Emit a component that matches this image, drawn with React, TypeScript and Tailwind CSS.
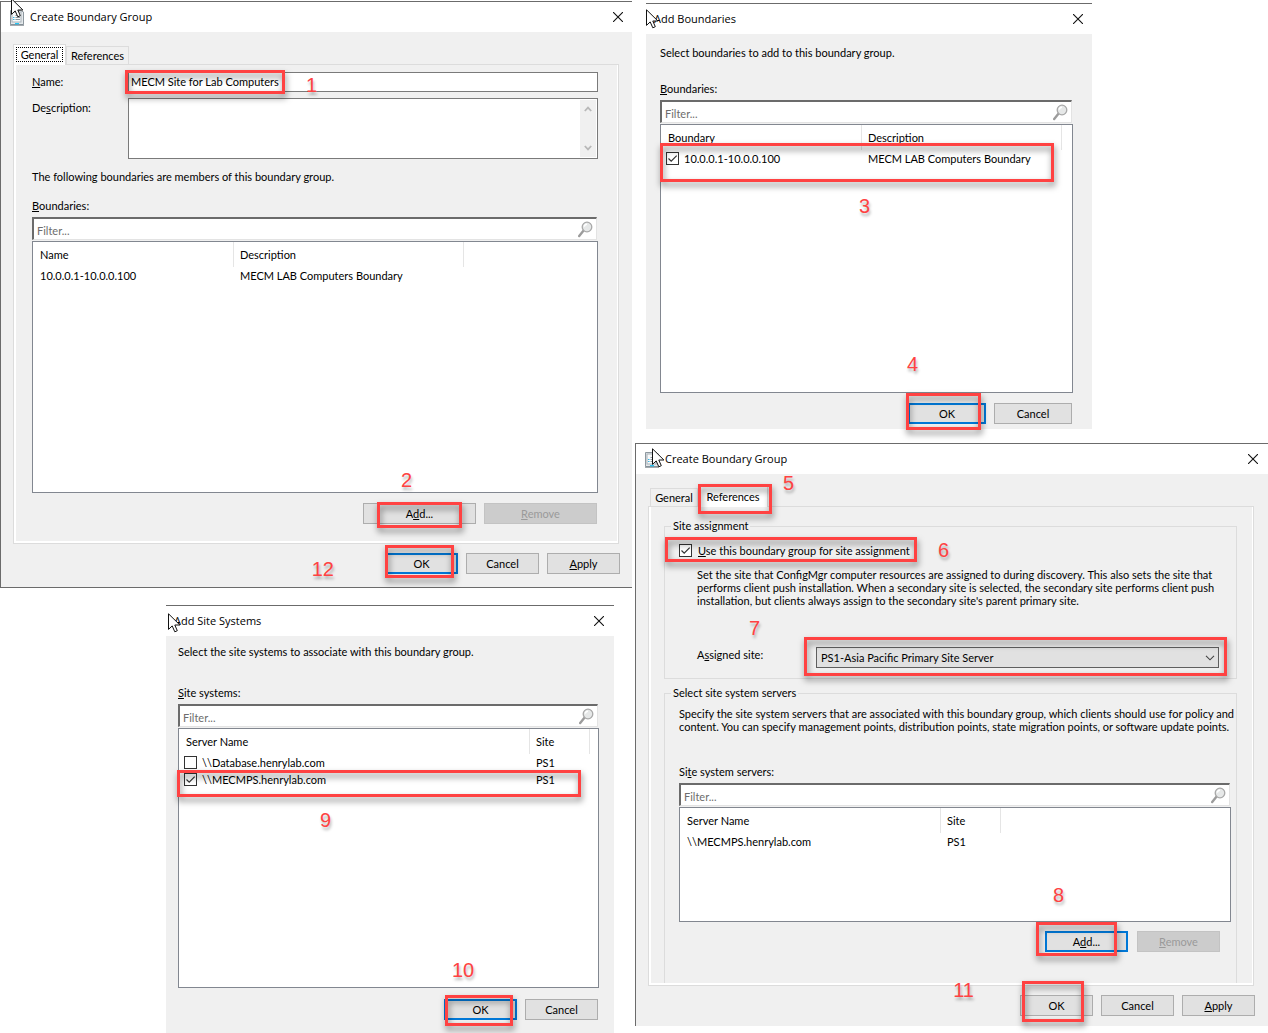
import type { ReactNode } from 'react';
import clsx from 'clsx';

type Column = { label: string; className: string };

const BOUNDARY_ROWS = [['10.0.0.1-10.0.0.100', 'MECM LAB Computers Boundary']];

const SITE_SYSTEM_ROWS = [
  ['\\\\Database.henrylab.com', 'PS1'],
  ['\\\\MECMPS.henrylab.com', 'PS1'],
];

function Cursor({ className }: { className: string }) {
  return (
    <svg className={clsx('absolute z-20', className)} width="13" height="20" viewBox="0 0 13 20" aria-hidden="true">
      <path
        d="M0.5 0.8V16.4L4.2 12.9L6.8 18.8L9.3 17.7L6.8 12H11.9Z"
        fill="#fff"
        stroke="#111"
        strokeWidth="1"
      />
    </svg>
  );
}

function DialogIcon() {
  return (
    <svg width="16" height="17" viewBox="0 0 16 17" aria-hidden="true">
      <path d="M1.5 1.5H11.5L14.5 3V15.5H1.5Z" fill="#e4e9ec" stroke="#8d979e" />
      <rect x="3" y="3" width="9" height="10" fill="#f8fafb" stroke="#a9b2b8" />
      <path d="M4 8.5H5.5M4 10.5H5.5" stroke="#35b5e5" />
      <path d="M6.5 6.5H11M6.5 8.5H11M6.5 10.5H11" stroke="#8d979e" />
      <rect x="6" y="14" width="4" height="1.5" fill="#27c4f4" />
      <path d="M1 16.2H15" stroke="#7b858c" />
    </svg>
  );
}

function SearchIcon() {
  return (
    <svg className="absolute right-1 top-1" width="15" height="17" viewBox="0 0 15 17" aria-hidden="true">
      <path d="M5.6 9.6L1.2 15" stroke="#9c9c9c" strokeWidth="2.4" strokeLinecap="round" />
      <circle cx="9" cy="6" r="4.8" fill="#e6e8e8" stroke="#a8a8a8" strokeWidth="1.3" />
      <path d="M6.3 5.6A2.8 2.8 0 0 1 9 3.2" stroke="#fff" strokeWidth="1.4" fill="none" />
    </svg>
  );
}

function Mark({ className }: { className: string }) {
  return (
    <div
      className={clsx(
        'pointer-events-none absolute z-10 border-[3px] border-[#ff4242] drop-shadow-[1px_4px_3px_rgba(0,0,0,0.5)]',
        className,
      )}
    />
  );
}

function Step({ n, className }: { n: number; className: string }) {
  return (
    <span
      className={clsx(
        "pointer-events-none absolute z-10 font-['Liberation_Sans',Arial,sans-serif] text-[20px] leading-5 text-[#ff4242] [text-shadow:1px_3px_3px_rgba(0,0,0,0.3)]",
        className,
      )}
    >
      {n}
    </span>
  );
}

type DialogProps = {
  title: string;
  icon?: boolean;
  className: string;
  titleClass: string;
  children: ReactNode;
};

function Dialog({ title, icon, className, titleClass, children }: DialogProps) {
  return (
    <section className={clsx('relative border-t border-[#6b6b6b] bg-[#f0f0f0]', className)}>
      <header className={clsx('flex h-[30px] items-center bg-white', titleClass)}>
        {icon && <DialogIcon />}
        <h2 className="font-['Open_Sans','Noto_Sans',sans-serif] text-[11px] leading-4">{title}</h2>
        <button type="button" aria-label="Close" className="ml-auto p-px">
          <svg width="10" height="10" viewBox="0 0 10 10" aria-hidden="true">
            <path d="M0 0L10 10M10 0L0 10" stroke="#111" strokeWidth="1.1" />
          </svg>
        </button>
      </header>
      {children}
    </section>
  );
}

type ButtonProps = {
  children: ReactNode;
  primary?: boolean;
  disabled?: boolean;
  className: string;
};

function Button({ children, primary, disabled, className }: ButtonProps) {
  return (
    <button
      type="button"
      disabled={disabled}
      className={clsx(
        'h-[21px] text-center leading-[13px]',
        disabled && 'border border-[#c3c3c3] bg-[#cccccc] text-[#9a9a9a]',
        primary && 'border-2 border-[#0078d7] bg-[#e1e1e1]',
        !disabled && !primary && 'border border-[#adadad] bg-[#e1e1e1]',
        className,
      )}
    >
      {children}
    </button>
  );
}

function Tab({ selected, className, children }: { selected?: boolean; className: string; children: ReactNode }) {
  return (
    <button
      type="button"
      role="tab"
      aria-selected={!!selected}
      className={clsx(
        'border border-b-0 border-[#dcdcdc] leading-[13px]',
        selected ? 'relative z-[1] -mb-px h-[21px] bg-white pb-0.5' : 'h-[18px] bg-[#f0f0f0]',
        className,
      )}
    >
      {children}
    </button>
  );
}

function Checkbox({ id, checked }: { id: string; checked?: boolean }) {
  return (
    <span className="relative block size-[13px] shrink-0">
      <input
        id={id}
        type="checkbox"
        defaultChecked={checked}
        className="peer block size-[13px] appearance-none border border-[#333] bg-white"
      />
      <svg className="pointer-events-none absolute inset-0 hidden peer-checked:block" width="13" height="13" viewBox="0 0 13 13" aria-hidden="true">
        <path d="M2.5 6.5L5.2 9.2L10.7 3.7" stroke="#333" strokeWidth="1.2" fill="none" />
      </svg>
    </span>
  );
}

function FilterBox({ id }: { id: string }) {
  return (
    <div className="relative mb-px mr-px mt-[5px]">
      <input
        id={id}
        type="text"
        placeholder="Filter..."
        className="block h-[23px] w-full rounded-none border-b border-l-2 border-r border-t-2 border-b-[#e3e3e3] border-l-[#6b6b6b] border-r-[#e3e3e3] border-t-[#6b6b6b] bg-white pl-[3px] pr-6 pt-0.5 placeholder:text-[#6d6d6d]"
      />
      <SearchIcon />
    </div>
  );
}

type ListViewProps = {
  id: string;
  columns: Column[];
  rows: string[][];
  checks?: boolean[];
  className: string;
};

function ListView({ id, columns, rows, checks, className }: ListViewProps) {
  return (
    <div className={clsx('border border-[#828790] bg-white', className)}>
      <table className="w-full table-fixed border-separate border-spacing-0 text-left">
        <thead>
          <tr className="h-[25px]">
            {columns.map((column, i) => (
              <th
                key={column.label}
                className={clsx(
                  'border-r border-[#e5e5e5] p-0 font-normal',
                  i === 0 ? 'pl-[7px]' : 'pl-1.5',
                  column.className,
                )}
              >
                {column.label}
              </th>
            ))}
            <td />
          </tr>
        </thead>
        <tbody>
          {rows.map((row, i) => (
            <tr key={row[0]} className="h-[17px]">
              <td className={clsx('p-0', checks ? 'pl-[5px]' : 'pl-[7px]')}>
                {checks ? (
                  <span className="flex items-center gap-[5px]">
                    <Checkbox id={`${id}-${i}`} checked={checks[i]} />
                    <label htmlFor={`${id}-${i}`}>{row[0]}</label>
                  </span>
                ) : (
                  row[0]
                )}
              </td>
              <td className="p-0 pl-1.5">{row[1]}</td>
              <td />
            </tr>
          ))}
        </tbody>
      </table>
    </div>
  );
}

function GeneralDialog() {
  return (
    <Dialog title="Create Boundary Group" icon className="border-b border-l" titleClass="gap-[5px] pl-2 pr-2">
      <div className="pb-[13px] pl-3 pr-3 pt-3">
        <div role="tablist" className="flex h-5 items-end">
          <Tab selected className="w-[53px] px-[2px]">
            <span className="block border border-dotted border-black">General</span>
          </Tab>
          <Tab className="w-[63px]">References</Tab>
        </div>
        <div className="mr-px border border-[#dcdcdc]">
          <div className="border-b-2 border-l-2 border-r border-white pb-[17px] pl-4 pr-[19px] pt-[7px]">
            <div className="grid grid-cols-[96px_1fr] gap-y-1.5">
              <label htmlFor="group-name" className="pt-[3px]">
                <u>N</u>ame:
              </label>
              <input
                id="group-name"
                type="text"
                defaultValue="MECM Site for Lab Computers"
                className="h-5 w-full border border-[#7a7a7a] bg-white pb-0.5 pl-0.5"
              />
              <label htmlFor="group-description" className="pt-[3px]">
                De<u>s</u>cription:
              </label>
              <div className="relative h-[61px]">
                <textarea id="group-description" className="block size-full resize-none border border-[#7a7a7a] bg-white pr-[18px]" />
                <div className="absolute inset-y-0.5 right-0.5 flex w-4 flex-col items-center justify-between bg-[#f0f0f0] py-1.5">
                  <svg width="8" height="6" viewBox="0 0 8 6" aria-hidden="true">
                    <path d="M0.8 5L4 1.6L7.2 5" stroke="#b8b8b8" strokeWidth="1.8" fill="none" />
                  </svg>
                  <svg width="8" height="6" viewBox="0 0 8 6" aria-hidden="true">
                    <path d="M0.8 1L4 4.4L7.2 1" stroke="#b8b8b8" strokeWidth="1.8" fill="none" />
                  </svg>
                </div>
              </div>
            </div>
            <p className="mt-[11px]">The following boundaries are members of this boundary group.</p>
            <label htmlFor="group-filter" className="mt-4 block">
              <u>B</u>oundaries:
            </label>
            <FilterBox id="group-filter" />
            <ListView
              id="group-boundary"
              columns={[
                { label: 'Name', className: 'w-[201px]' },
                { label: 'Description', className: 'w-[230px]' },
              ]}
              rows={BOUNDARY_ROWS}
              className="h-[252px]"
            />
            <div className="mr-px mt-2.5 flex justify-end gap-2">
              <Button className="w-[113px]">
                A<u>d</u>d...
              </Button>
              <Button disabled className="w-[113px]">
                <u>R</u>emove
              </Button>
            </div>
          </div>
        </div>
        <div className="mt-[9px] flex justify-end gap-2">
          <Button primary className="w-[73px]">OK</Button>
          <Button className="w-[73px]">Cancel</Button>
          <Button className="w-[73px]">
            <u>A</u>pply
          </Button>
        </div>
      </div>

      <Cursor className="-top-1 left-2.5" />
      <Mark className="left-[124px] top-[68px] h-[24px] w-[160px]" />
      <Step n={1} className="left-[305px] top-[73px]" />
      <Mark className="right-[170px] top-[500px] h-[26px] w-[85px]" />
      <Step n={2} className="right-[220px] top-[468px]" />
      <Mark className="right-[178px] top-[543px] h-[33px] w-[69px]" />
      <Step n={12} className="right-[298px] top-[557px]" />
    </Dialog>
  );
}

function AddBoundariesDialog() {
  return (
    <Dialog title="Add Boundaries" className="ml-[11px] w-[446px]" titleClass="pl-2 pr-2">
      <div className="pb-[5px] pl-3.5 pr-[19px] pt-3">
        <p>Select boundaries to add to this boundary group.</p>
        <label htmlFor="boundaries-filter" className="mt-[23px] block">
          <u>B</u>oundaries:
        </label>
        <FilterBox id="boundaries-filter" />
        <ListView
          id="boundary"
          columns={[
            { label: 'Boundary', className: 'w-[201px]' },
            { label: 'Description', className: 'w-[200px]' },
          ]}
          rows={BOUNDARY_ROWS}
          checks={[true]}
          className="h-[269px]"
        />
        <div className="mr-px mt-2.5 flex justify-end gap-2">
          <Button primary className="w-[78px]">OK</Button>
          <Button className="w-[78px]">Cancel</Button>
        </div>
      </div>

      <Cursor className="left-0 top-[5px]" />
      <Mark className="left-3.5 top-[139px] h-[39px] w-[394px]" />
      <Step n={3} className="left-[213px] top-[192px]" />
      <Step n={4} className="left-[261px] top-[350px]" />
      <Mark className="left-[260px] top-[389px] h-[37px] w-[75px]" />
    </Dialog>
  );
}

function AddSiteSystemsDialog() {
  return (
    <Dialog title="Add Site Systems" className="ml-[166px] w-[448px]" titleClass="pl-2 pr-[9px]">
      <div className="px-3 pb-[13px] pt-[9px]">
        <div className="mr-[3px]">
          <p>Select the site systems to associate with this boundary group.</p>
          <label htmlFor="systems-filter" className="mt-7 block">
            <u>S</u>ite systems:
          </label>
          <FilterBox id="systems-filter" />
          <ListView
            id="system"
            columns={[
              { label: 'Server Name', className: 'w-[351px]' },
              { label: 'Site', className: 'w-[60px]' },
            ]}
            rows={SITE_SYSTEM_ROWS}
            checks={[false, true]}
            className="h-[260px]"
          />
          <div className="mr-px mt-[11px] flex justify-end gap-2">
            <Button primary className="w-[73px]">OK</Button>
            <Button className="w-[73px]">Cancel</Button>
          </div>
        </div>
      </div>

      <Cursor className="left-0.5 top-[7px]" />
      <Mark className="left-[11px] top-[164px] h-[27px] w-[404px]" />
      <Step n={9} className="left-[154px] top-[204px]" />
      <Step n={10} className="left-[286px] top-[354px]" />
      <Mark className="left-[279px] top-[389px] h-[31px] w-[68px]" />
    </Dialog>
  );
}

function ReferencesDialog() {
  return (
    <Dialog title="Create Boundary Group" icon className="border-l" titleClass="gap-[5px] pl-2 pr-[9px]">
      <div className="pb-2.5 pl-3 pr-[13px] pt-3">
        <div role="tablist" className="flex h-5 items-end pl-0.5">
          <Tab className="w-[48px]">General</Tab>
          <Tab selected className="w-[70px]">References</Tab>
        </div>
        <div className="mr-px border border-[#dcdcdc]">
          <div className="border-b-2 border-l-2 border-r border-white pl-[13px] pr-[15px] pt-3">
            <fieldset className="min-w-0 border border-[#dcdcdc] pb-2.5 pl-3.5 pr-[17px]">
              <legend className="-ml-2 h-3.5 px-0.5">Site assignment</legend>
              <div className="mt-[11px] flex items-center gap-1.5">
                <Checkbox id="use-assignment" checked />
                <label htmlFor="use-assignment">
                  <u>U</u>se this boundary group for site assignment
                </label>
              </div>
              <p className="mt-[11px] whitespace-nowrap pl-[18px]">
                Set the site that ConfigMgr computer resources are assigned to during discovery. This also sets the site that
                <br />
                performs client push installation. When a secondary site is selected, the secondary site performs client push
                <br />
                installation, but clients always assign to the secondary site's parent primary site.
              </p>
              <div className="mt-10 grid grid-cols-[119px_1fr] pl-[18px]">
                <label htmlFor="assigned-site" className="pt-px">
                  A<u>s</u>signed site:
                </label>
                <div className="relative">
                  <select
                    id="assigned-site"
                    className="block h-[21px] w-full appearance-none border border-[#5f5f5f] bg-[#e1e1e1] pl-1"
                  >
                    <option>PS1-Asia Pacific Primary Site Server</option>
                  </select>
                  <svg className="pointer-events-none absolute right-1 top-2" width="10" height="6" viewBox="0 0 10 6" aria-hidden="true">
                    <path d="M1 0.8L5 4.8L9 0.8" stroke="#444" strokeWidth="1.1" fill="none" />
                  </svg>
                </div>
              </div>
            </fieldset>
            <fieldset className="mt-[7px] min-w-0 border border-b-0 border-[#dcdcdc] pb-[31px] pl-3.5 pr-[5px]">
              <legend className="-ml-2 h-3.5 px-0.5">Select site system servers</legend>
              <p className="mt-[7px] whitespace-nowrap">
                Specify the site system servers that are associated with this boundary group, which clients should use for policy and
                <br />
                content. You can specify management points, distribution points, state migration points, or software update points.
              </p>
              <label htmlFor="servers-filter" className="mt-8 block">
                Si<u>t</u>e system servers:
              </label>
              <FilterBox id="servers-filter" />
              <ListView
                id="server"
                columns={[
                  { label: 'Server Name', className: 'w-[261px]' },
                  { label: 'Site', className: 'w-[60px]' },
                ]}
                rows={SITE_SYSTEM_ROWS.slice(1)}
                className="h-[115px]"
              />
              <div className="mr-[11px] mt-[9px] flex justify-end gap-[9px]">
                <Button primary className="w-[83px]">
                  A<u>d</u>d...
                </Button>
                <Button disabled className="w-[83px]">
                  <u>R</u>emove
                </Button>
              </div>
            </fieldset>
          </div>
        </div>
        <div className="mt-[9px] flex justify-end gap-2">
          <Button className="w-[73px]">OK</Button>
          <Button className="w-[73px]">Cancel</Button>
          <Button className="w-[73px]">
            <u>A</u>pply
          </Button>
        </div>
      </div>

      <Cursor className="left-4 top-1" />
      <Mark className="left-[62px] top-10 h-[30px] w-[74px]" />
      <Step n={5} className="left-[147px] top-[29px]" />
      <Mark className="left-[29px] top-[93px] h-[25px] w-[252px]" />
      <Step n={6} className="left-[302px] top-[96px]" />
      <Step n={7} className="left-[113px] top-[174px]" />
      <Mark className="left-[168px] right-[41px] top-[193px] h-[39px]" />
      <Step n={8} className="right-[204px] top-[441px]" />
      <Mark className="right-[151px] top-[478px] h-[34px] w-[81px]" />
      <Step n={11} className="right-[294px] top-[536px]" />
      <Mark className="right-[184px] top-[537px] h-[41px] w-[62px]" />
    </Dialog>
  );
}

export default function App() {
  return (
    <main className="grid min-h-screen grid-cols-[minmax(0,632fr)_minmax(0,633fr)] items-start gap-x-[3px] overflow-hidden bg-white font-['Lato','Liberation_Sans',sans-serif] text-[11px] leading-[13px] text-black">
      <div className="flex flex-col gap-[17px] pt-px">
        <GeneralDialog />
        <AddSiteSystemsDialog />
      </div>
      <div className="flex flex-col gap-3.5 pt-[3px]">
        <AddBoundariesDialog />
        <ReferencesDialog />
      </div>
    </main>
  );
}
